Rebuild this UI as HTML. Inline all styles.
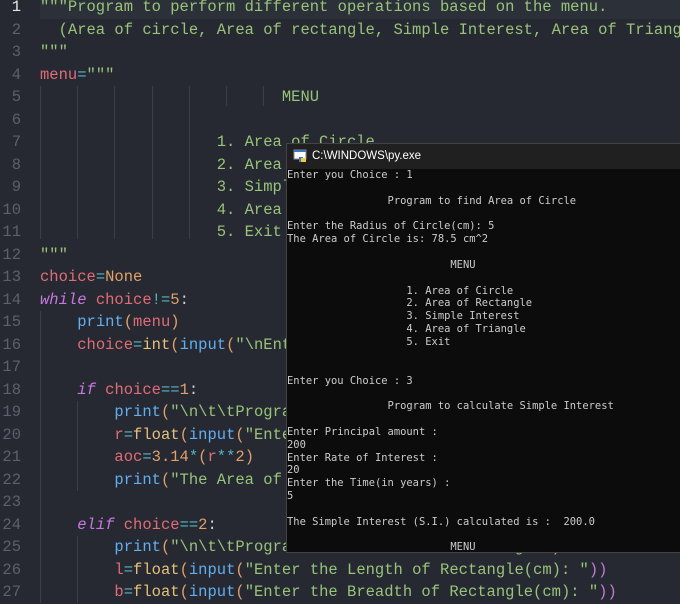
<!DOCTYPE html>
<html><head><meta charset="utf-8"><style>
*{margin:0;padding:0;box-sizing:border-box}
body{width:680px;height:603px;overflow:hidden;background:#262932;position:relative;font-family:"Liberation Mono",monospace}
.ln{position:absolute;left:0;width:21px;text-align:right;color:#5b606b;font-size:15.5px;line-height:22.5px;white-space:pre}
.code{position:absolute;left:40px;font-size:15.5px;line-height:22.5px;white-space:pre;color:#d0d4dc}
.g{position:absolute;width:1px;background:#3a3e48}
.s{color:#98c379}.r{color:#e06c75}.c{color:#56b6c2}.o{color:#e0a068}.k{color:#c678dd;font-style:italic}.f{color:#61afef}.y{color:#e5c07b}.p{color:#d0d4dc}
#con{position:absolute;left:286px;top:143px;width:400px;height:410px;background:#0c0c0c;border:1px solid #444;border-right:none}
#tb{height:25px;background:#202020;color:#fff;font-family:"Liberation Sans",sans-serif;font-size:11.5px;line-height:25px;padding-left:25px;position:relative}
#ct{position:absolute;left:0;top:25px;font-family:"DejaVu Sans Mono",monospace;font-size:10.45px;line-height:12.85px;color:#cccccc;white-space:pre}
</style></head><body>
<div style="position:absolute;left:40px;top:-4px;width:640px;height:22.5px;background:#2c3039"></div>
<div class="g" style="left:40px;top:86px;height:153px"></div>
<div class="g" style="left:77px;top:86px;height:153px"></div>
<div class="g" style="left:114px;top:86px;height:153px"></div>
<div class="g" style="left:152px;top:86px;height:153px"></div>
<div class="g" style="left:189px;top:86px;height:153px"></div>
<div class="g" style="left:226px;top:86px;height:20px"></div>
<div class="g" style="left:263px;top:86px;height:20px"></div>
<div class="g" style="left:40px;top:311px;height:292px"></div>
<div class="g" style="left:77px;top:401px;height:90px"></div>
<div class="g" style="left:77px;top:536px;height:67px"></div>
<div class="ln" style="top:-4px"><span style="color:#e6e6e6">1</span>
2
3
4
5
6
7
8
9
10
11
12
13
14
15
16
17
18
19
20
21
22
23
24
25
26
27</div>
<div class="code" style="top:-4px"><span class="s">"""Program to perform different operations based on the menu.
  (Area of circle, Area of rectangle, Simple Interest, Area of Triangle)
"""</span>
<span class="r">menu</span><span class="c">=</span><span class="s">"""
                          MENU

                   1. Area of Circle
                   2. Area of Rectangle
                   3. Simple Interest
                   4. Area of Triangle
                   5. Exit
"""</span>
<span class="r">choice</span><span class="c">=</span><span class="o">None</span>
<span class="k">while</span> <span class="r">choice</span><span class="c">!=</span><span class="o">5</span><span class="p">:</span>
    <span class="f">print</span><span class="o">(</span><span class="r">menu</span><span class="o">)</span>
    <span class="r">choice</span><span class="c">=</span><span class="y">int</span><span class="o">(</span><span class="f">input</span><span class="o">(</span><span class="s">"\nEnter you Choice : "</span><span class="o">))</span>

    <span class="k">if</span> <span class="r">choice</span><span class="c">==</span><span class="o">1</span><span class="p">:</span>
        <span class="f">print</span><span class="o">(</span><span class="s">"\n\t\tProgram to find Area of Circle"</span><span class="o">)</span>
        <span class="r">r</span><span class="c">=</span><span class="y">float</span><span class="o">(</span><span class="f">input</span><span class="o">(</span><span class="s">"Enter the Radius of Circle(cm): "</span><span class="o">))</span>
        <span class="r">aoc</span><span class="c">=</span><span class="o">3.14</span><span class="c">*</span><span class="o">(</span><span class="r">r</span><span class="c">**</span><span class="o">2)</span>
        <span class="f">print</span><span class="o">(</span><span class="s">"The Area of Circle is:"</span><span class="o">)</span>

    <span class="k">elif</span> <span class="r">choice</span><span class="c">==</span><span class="o">2</span><span class="p">:</span>
        <span class="f">print</span><span class="o">(</span><span class="s">"\n\t\tProgram to find Area of Rectangle"</span><span class="o">)</span>
        <span class="r">l</span><span class="c">=</span><span class="y">float</span><span class="o">(</span><span class="f">input</span><span class="o">(</span><span class="s">"Enter the Length of Rectangle(cm): "</span><span class="o" style="color:#c678dd">))</span>
        <span class="r">b</span><span class="c">=</span><span class="y">float</span><span class="o">(</span><span class="f">input</span><span class="o">(</span><span class="s">"Enter the Breadth of Rectangle(cm): "</span><span class="o" style="color:#c678dd">))</span></div>
<div id="con">
<div id="tb"><svg style="position:absolute;left:6px;top:5px" width="14" height="14" viewBox="0 0 14 14"><rect x="1" y="1" width="12" height="9" fill="#fff" stroke="#888"/><rect x="1" y="1" width="12" height="2" fill="#3a77c6"/><path d="M6 8h4v5H6z" fill="#3a77c6"/><path d="M8 9h5v4H8z" fill="#f3c93d"/></svg>C:\WINDOWS\py.exe</div>
<div id="ct">Enter you Choice : 1

                Program to find Area of Circle

Enter the Radius of Circle(cm): 5
The Area of Circle is: 78.5 cm^2

                          MENU

                   1. Area of Circle
                   2. Area of Rectangle
                   3. Simple Interest
                   4. Area of Triangle
                   5. Exit


Enter you Choice : 3

                Program to calculate Simple Interest

Enter Principal amount :
200
Enter Rate of Interest :
20
Enter the Time(in years) :
5

The Simple Interest (S.I.) calculated is :  200.0

                          MENU</div>
</div>
</body></html>
